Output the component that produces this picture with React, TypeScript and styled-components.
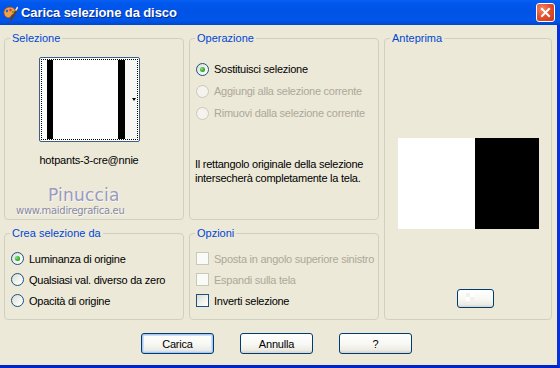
import styled, { createGlobalStyle } from 'styled-components';

const GlobalStyle = createGlobalStyle`
  html, body {
    margin: 0;
    padding: 0;
    background: #ECE9D8;
  }
  body {
    font-family: "Liberation Sans", Arial, sans-serif;
    font-size: 11px;
    color: #000;
  }
`;

const Window = styled.div`
  width: 560px;
  height: 368px;
  display: flex;
  flex-direction: column;
  background: #ECE9D8;
  overflow: hidden;
`;

const TitleBar = styled.div`
  height: 25px;
  flex: none;
  display: flex;
  align-items: center;
  gap: 3px;
  padding: 0 5px 0 2px;
  background: linear-gradient(
    to bottom,
    #0A5FF2 0%,
    #0058EE 12%,
    #0053E6 45%,
    #0056E8 80%,
    #0047D0 100%
  );
`;

const TitleText = styled.div`
  flex: 1;
  color: #fff;
  font-weight: bold;
  font-size: 13px;
  letter-spacing: -0.1px;
  text-shadow: 1px 1px 0 #0B2C8F;
`;

const CloseButton = styled.div`
  width: 19px;
  height: 19px;
  box-sizing: border-box;
  border: 1px solid #fff;
  border-radius: 3px;
  background: radial-gradient(circle at 30% 30%, #F08A6C 0%, #E2512E 45%, #C8391A 100%);
  display: flex;
  align-items: center;
  justify-content: center;
`;

const Body = styled.div`
  flex: 1;
  display: flex;
  flex-direction: column;
  padding: 7px 0 0 4px;
  border-right: 3px solid #0831D9;
  border-bottom: 3px solid #0025C9;
`;

const Panels = styled.div`
  display: grid;
  grid-template-columns: 180px 190px 168px;
  grid-template-rows: 188px 93px;
  column-gap: 5px;
  row-gap: 7px;
`;

const Group = styled.fieldset<{ $span?: boolean }>`
  margin: 0;
  padding: 0 5px 5px;
  min-width: 0;
  border: 1px solid #D0D0BF;
  border-radius: 4px;
  display: flex;
  flex-direction: column;
  grid-row: ${p => (p.$span ? 'span 2' : 'auto')};
`;

const Legend = styled.legend`
  padding: 0 2px;
  margin: 0;
  color: #0046D5;
  line-height: 13px;
`;

/* Selezione */

const ThumbColumn = styled.div`
  width: 104px;
  margin: 12px 0 0 27px;
  display: flex;
  flex-direction: column;
  align-items: center;
`;

const Thumb = styled.div`
  width: 101px;
  height: 85px;
  box-sizing: border-box;
  padding: 1px;
  border: 1px solid #3D5F86;
  border-radius: 2px;
  background: #fff;
`;

const ThumbFocus = styled.div`
  height: 100%;
  box-sizing: border-box;
  border: 1px dotted #000;
  display: flex;
  padding-left: 5px;
`;

const Swatch = styled.div`
  width: 78px;
  box-sizing: border-box;
  border-left: 6px solid #000;
  border-right: 7px solid #000;
  background: #fff;
`;

const SwatchSide = styled.div`
  flex: 1;
  background: #F6F6F4;
  display: flex;
  align-items: center;
  justify-content: flex-end;
  padding-right: 1px;
`;

const DropArrow = styled.div`
  width: 0;
  height: 0;
  border-left: 2.5px solid transparent;
  border-right: 2.5px solid transparent;
  border-top: 3px solid #000;
`;

const ThumbName = styled.div`
  margin-top: 12px;
  letter-spacing: -0.2px;
  white-space: nowrap;
`;

const Watermark = styled.div`
  margin-top: 20px;
  display: flex;
  flex-direction: column;
`;

const WatermarkLine = styled.div<{ $indent: number; $size: number }>`
  padding-left: ${p => p.$indent}px;
  font-family: "DejaVu Sans", sans-serif;
  font-size: ${p => p.$size}px;
  line-height: ${p => p.$size + 2}px;
  color: ${p => (p.$size > 12 ? '#9A9AC2' : '#8A8AA6')};
  letter-spacing: ${p => (p.$size > 12 ? '0.2px' : '-0.3px')};
  text-shadow: 1px 1px 0 rgba(255, 255, 255, 0.7);
  white-space: nowrap;
`;

/* options */

const OptionList = styled.div<{ $top: number }>`
  display: flex;
  flex-direction: column;
  margin-top: ${p => p.$top}px;
  padding-left: 1px;
`;

const OptionRow = styled.div<{ $pitch: number; $disabled?: boolean }>`
  height: ${p => p.$pitch}px;
  display: flex;
  align-items: center;
  gap: 5px;
  color: ${p => (p.$disabled ? '#ACA899' : '#000')};
  letter-spacing: -0.25px;
  white-space: nowrap;
`;

const RadioMark = styled.span<{ $checked?: boolean; $disabled?: boolean }>`
  width: 13px;
  height: 13px;
  flex: none;
  box-sizing: border-box;
  border-radius: 50%;
  border: 1px solid ${p => (p.$disabled ? '#CAC8BB' : '#1C5180')};
  background: ${p =>
    p.$disabled
      ? '#F4F3EE'
      : 'linear-gradient(135deg, #DCDCD5 0%, #F4F4F0 60%, #FFFFFF 100%)'};
  display: flex;
  align-items: center;
  justify-content: center;
  &::after {
    content: '';
    display: ${p => (p.$checked ? 'block' : 'none')};
    width: 5px;
    height: 5px;
    border-radius: 50%;
    background: radial-gradient(circle at 35% 35%, #7BE57A 0%, #21A121 70%);
  }
`;

const CheckMark = styled.span<{ $disabled?: boolean }>`
  width: 13px;
  height: 13px;
  flex: none;
  box-sizing: border-box;
  border: 1px solid ${p => (p.$disabled ? '#CAC8BB' : '#1C5180')};
  background: ${p =>
    p.$disabled
      ? '#FAFAF7'
      : 'linear-gradient(135deg, #DCDCD5 0%, #F4F4F0 60%, #FFFFFF 100%)'};
`;

const Description = styled.div`
  margin-top: 33px;
  line-height: 14px;
  letter-spacing: -0.25px;
`;

/* Anteprima */

const Preview = styled.div`
  margin-top: 93px;
  align-self: center;
  width: 141px;
  height: 91px;
  display: flex;
`;

const PreviewPart = styled.div<{ $width: number; $color: string }>`
  width: ${p => p.$width}px;
  background: ${p => p.$color};
`;

/* buttons */

const XpButton = styled.button<{ $default?: boolean }>`
  width: 73px;
  height: 21px;
  padding: 0;
  box-sizing: border-box;
  border: 1px solid #003C74;
  border-radius: 3px;
  background: linear-gradient(to bottom, #FFFFFF 0%, #F7F7F3 55%, #ECEBE4 85%, #D8D2C6 100%);
  box-shadow: ${p => (p.$default ? 'inset 0 0 0 1px #A8C6F0, inset 0 0 0 2px #CFDFF7' : 'none')};
  font-family: "Liberation Sans", Arial, sans-serif;
  font-size: 11px;
  color: #000;
  letter-spacing: -0.2px;
`;

const PatternButton = styled(XpButton)`
  width: 37px;
  height: 19px;
  margin: 60px 0 0 15px;
  align-self: center;
  background:
    repeating-conic-gradient(#FFFFFF 0% 25%, #F1F1EC 0% 50%) 8px 3px / 8px 8px no-repeat,
    linear-gradient(to bottom, #FFFFFF 0%, #F7F7F3 55%, #ECEBE4 85%, #D8D2C6 100%);
`;

const ButtonBar = styled.div`
  margin-top: 13px;
  display: flex;
  justify-content: center;
  gap: 26px;
  padding-right: 8px;
`;

const AppIcon = () => (
  <svg width="16" height="16" viewBox="0 0 16 16">
    <path d="M2 9 C1 5 4 2 8 2 C12 2 14 5 13 8 C12 10 10 9 9 11 C8 14 3 13 2 9 Z" fill="#F0A04A" stroke="#8A4A16" strokeWidth="0.8" />
    <circle cx="5" cy="6" r="1.2" fill="#2B5FD9" />
    <circle cx="8.5" cy="5" r="1.2" fill="#D93A2B" />
    <circle cx="11" cy="7" r="1.1" fill="#3CA33C" />
    <path d="M9 15 L15 4" stroke="#6B3A12" strokeWidth="1.6" strokeLinecap="round" />
    <path d="M14 5 L15.5 2.5" stroke="#E8E8E8" strokeWidth="1.6" strokeLinecap="round" />
  </svg>
);

const CloseIcon = () => (
  <svg width="11" height="11" viewBox="0 0 11 11">
    <path d="M2 2 L9 9 M9 2 L2 9" stroke="#fff" strokeWidth="2" strokeLinecap="square" />
  </svg>
);

export default function App() {
  return (
    <>
      <GlobalStyle />
      <Window>
        <TitleBar>
          <AppIcon />
          <TitleText>Carica selezione da disco</TitleText>
          <CloseButton>
            <CloseIcon />
          </CloseButton>
        </TitleBar>
        <Body>
          <Panels>
            <Group>
              <Legend>Selezione</Legend>
              <ThumbColumn>
                <Thumb>
                  <ThumbFocus>
                    <Swatch />
                    <SwatchSide>
                      <DropArrow />
                    </SwatchSide>
                  </ThumbFocus>
                </Thumb>
                <ThumbName>hotpants-3-cre@nnie</ThumbName>
              </ThumbColumn>
              <Watermark>
                <WatermarkLine $indent={38} $size={17}>Pinuccia</WatermarkLine>
                <WatermarkLine $indent={6} $size={10}>www.maidiregrafica.eu</WatermarkLine>
              </Watermark>
            </Group>

            <Group>
              <Legend>Operazione</Legend>
              <OptionList $top={13}>
                <OptionRow $pitch={22}>
                  <RadioMark $checked />
                  Sostituisci selezione
                </OptionRow>
                <OptionRow $pitch={22} $disabled>
                  <RadioMark $disabled />
                  Aggiungi alla selezione corrente
                </OptionRow>
                <OptionRow $pitch={22} $disabled>
                  <RadioMark $disabled />
                  Rimuovi dalla selezione corrente
                </OptionRow>
              </OptionList>
              <Description>
                Il rettangolo originale della selezione
                <br />
                intersecherà completamente la tela.
              </Description>
            </Group>

            <Group $span>
              <Legend>Anteprima</Legend>
              <Preview>
                <PreviewPart $width={77} $color="#FFFFFF" />
                <PreviewPart $width={64} $color="#000000" />
              </Preview>
              <PatternButton />
            </Group>

            <Group>
              <Legend>Crea selezione da</Legend>
              <OptionList $top={8}>
                <OptionRow $pitch={21}>
                  <RadioMark $checked />
                  Luminanza di origine
                </OptionRow>
                <OptionRow $pitch={21}>
                  <RadioMark />
                  Qualsiasi val. diverso da zero
                </OptionRow>
                <OptionRow $pitch={21}>
                  <RadioMark />
                  Opacità di origine
                </OptionRow>
              </OptionList>
            </Group>

            <Group>
              <Legend>Opzioni</Legend>
              <OptionList $top={8}>
                <OptionRow $pitch={21} $disabled>
                  <CheckMark $disabled />
                  Sposta in angolo superiore sinistro
                </OptionRow>
                <OptionRow $pitch={21} $disabled>
                  <CheckMark $disabled />
                  Espandi sulla tela
                </OptionRow>
                <OptionRow $pitch={21}>
                  <CheckMark />
                  Inverti selezione
                </OptionRow>
              </OptionList>
            </Group>
          </Panels>

          <ButtonBar>
            <XpButton $default>Carica</XpButton>
            <XpButton>Annulla</XpButton>
            <XpButton>?</XpButton>
          </ButtonBar>
        </Body>
      </Window>
    </>
  );
}
